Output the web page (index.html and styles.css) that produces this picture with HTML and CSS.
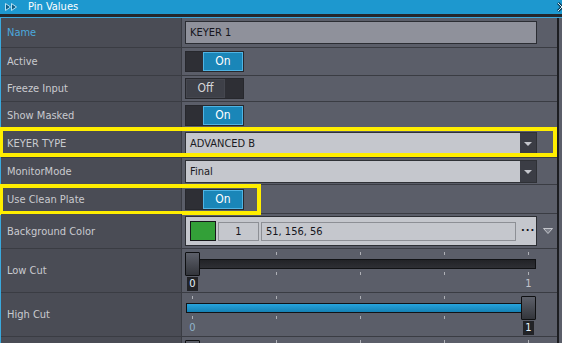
FILE: index.html
```html
<!DOCTYPE html>
<html lang="en">
<head>
    <meta charset="UTF-8">
    <meta name="viewport" content="width=device-width, initial-scale=1.0">
    <title>Pin Values</title>
    <link rel="stylesheet" href="styles.css">
</head>
<body>
    <!-- Title bar -->
    <div class="titlebar">
        <svg class="title-icon" width="13" height="8" viewBox="0 0 13 8">
            <path d="M0.5 0.5 L5.5 4 L0.5 7.5 Z M6.5 0.5 L11.5 4 L6.5 7.5 Z" fill="#0f5f88" stroke="#b6e1f4" stroke-width="1"/>
        </svg>
        <span class="title">Pin Values</span>
        <svg class="close" width="10" height="10" viewBox="0 0 10 10">
            <path d="M1 1 L9 9 M9 1 L1 9" stroke="#0c3c55" stroke-width="3"/>
            <path d="M1 1 L9 9 M9 1 L1 9" stroke="#d8f0fb" stroke-width="1"/>
        </svg>
    </div>
    <div class="shade"></div>

    <!-- Pin list -->
    <div class="content">
        <div class="grid">
            <div class="row row-name">
                <div class="label current">Name</div>
                <div class="value"><div class="textbox">KEYER 1</div></div>
            </div>
            <div class="row row-active">
                <div class="label">Active</div>
                <div class="value"><div class="toggle"><span class="knob">On</span></div></div>
            </div>
            <div class="row row-freeze">
                <div class="label">Freeze Input</div>
                <div class="value"><div class="toggle off"><span class="knob">Off</span></div></div>
            </div>
            <div class="row row-masked">
                <div class="label">Show Masked</div>
                <div class="value"><div class="toggle"><span class="knob">On</span></div></div>
            </div>
            <div class="row row-keyer">
                <div class="label">KEYER TYPE</div>
                <div class="value">
                    <div class="dropdown">
                        <span class="dropdown-text">ADVANCED B</span>
                        <span class="dropdown-arrow"></span>
                    </div>
                </div>
                <div class="mark mark-keyer"></div>
            </div>
            <div class="row row-monitor">
                <div class="label">MonitorMode</div>
                <div class="value">
                    <div class="dropdown">
                        <span class="dropdown-text">Final</span>
                        <span class="dropdown-arrow"></span>
                    </div>
                </div>
            </div>
            <div class="row row-plate">
                <div class="label">Use Clean Plate</div>
                <div class="value"><div class="toggle"><span class="knob">On</span></div></div>
                <div class="mark mark-plate"></div>
            </div>
            <div class="row row-color">
                <div class="label">Background Color</div>
                <div class="value">
                    <div class="color-field">
                        <div class="swatch"></div>
                        <div class="color-index">1</div>
                        <div class="color-rgb">51, 156, 56</div>
                        <div class="color-more">...</div>
                    </div>
                    <svg class="expand" width="10" height="6" viewBox="0 0 10 6">
                        <path d="M0.5 0.5 L9.5 0.5 L5 5.5 Z" fill="#7d808a" stroke="#c3c5cb" stroke-width="1"/>
                    </svg>
                </div>
            </div>
            <div class="row row-slider">
                <div class="label">Low Cut</div>
                <div class="value">
                    <div class="slider">
                        <div class="ticks"><i></i><i></i><i></i><i></i><i></i></div>
                        <div class="track"></div>
                        <div class="ticks"><i></i><i></i><i></i><i></i><i></i></div>
                        <div class="scale">
                            <span class="num selected">0</span>
                            <span class="num">1</span>
                        </div>
                        <div class="thumb at-min"></div>
                    </div>
                </div>
            </div>
            <div class="row row-slider">
                <div class="label">High Cut</div>
                <div class="value">
                    <div class="slider">
                        <div class="ticks"><i></i><i></i><i></i><i></i><i></i></div>
                        <div class="track filled"></div>
                        <div class="ticks"><i></i><i></i><i></i><i></i><i></i></div>
                        <div class="scale">
                            <span class="num dim">0</span>
                            <span class="num selected">1</span>
                        </div>
                        <div class="thumb at-max"></div>
                    </div>
                </div>
            </div>
            <div class="row row-slider">
                <div class="label"></div>
                <div class="value">
                    <div class="slider">
                        <div class="ticks"><i></i><i></i><i></i><i></i><i></i></div>
                        <div class="track"></div>
                        <div class="thumb at-min"></div>
                    </div>
                </div>
            </div>
        </div>
        <div class="edge"></div>
        <div class="gutter"></div>
    </div>
</body>
</html>
```

FILE: styles.css
```css
* {
    margin: 0;
    padding: 0;
    box-sizing: border-box;
}
body, html {
    width: 100%;
    height: 100%;
    overflow: hidden;
}
body {
    background-color: #5b5e69;
    font-family: "DejaVu Sans Condensed", "DejaVu Sans", sans-serif;
    font-stretch: condensed;
    font-size: 11px;
    color: #c9cacf;
}
/* Title bar */
.titlebar {
    height: 14px;
    background-color: #1d98cf;
    display: flex;
    align-items: center;
    color: #ffffff;
    overflow: hidden;
}
.title-icon {
    margin-left: 5px;
    flex: none;
}
.title {
    margin-left: 10px;
    line-height: 14px;
}
.close {
    margin-left: auto;
    margin-right: -5px;
    flex: none;
}
.shade {
    height: 3px;
    background-color: #24272c;
}
/* Pin list */
.content {
    display: flex;
    border-top: 1px solid #3aa9dd;
}
.grid {
    width: 557px;
    flex: none;
    border-left: 1px solid #3aa9dd;
}
.edge {
    width: 2px;
    background-color: #1c1d21;
}
.gutter {
    flex: 1;
    background-color: #5b5e69;
}
.row {
    display: flex;
    position: relative;
    border-bottom: 1px solid #3a3c43;
}
.row-name { height: 30px; }
.row-active { height: 28px; }
.row-freeze { height: 26px; }
.row-masked { height: 27px; }
.row-keyer { height: 29px; }
.row-monitor { height: 27px; }
.row-plate { height: 29px; }
.row-color { height: 35px; }
.row-slider { height: 44px; }
.label {
    width: 181px;
    flex: none;
    background-color: #4a4c55;
    border-right: 1px solid #3a3c43;
    padding-left: 6px;
    display: flex;
    align-items: center;
}
.label.current {
    color: #4ba9de;
}
.value {
    flex: 1;
    padding-left: 3px;
    display: flex;
    align-items: center;
}
.row-slider .value {
    align-items: flex-start;
}
/* Text field */
.textbox {
    width: 352px;
    height: 23px;
    background-color: #8f919b;
    border: 1px solid #2b2d33;
    color: #15151c;
    padding-left: 4px;
    line-height: 21px;
}
/* Toggle */
.toggle {
    width: 59px;
    height: 21px;
    display: flex;
    background-color: #2e2f35;
    border: 1px solid #27282d;
}
.toggle .knob {
    width: 40px;
    margin-left: auto;
    background-color: #1a86b8;
    border: 1px solid #4fb4e4;
    color: #ffffff;
    text-align: center;
    line-height: 17px;
    font-size: 12px;
}
.toggle.off .knob {
    width: 39px;
    margin-left: 0;
    background-color: #3e4048;
    border-color: #45474f;
    color: #d6d7da;
}
/* Dropdown */
.dropdown {
    width: 352px;
    height: 23px;
    display: flex;
    background-color: #c5c7cd;
    border: 1px solid #2f3136;
    color: #1a1a22;
}
.dropdown-text {
    flex: 1;
    padding-left: 4px;
    line-height: 21px;
}
.dropdown-arrow {
    width: 16px;
    background-color: #3b3d45;
    position: relative;
}
.dropdown-arrow::after {
    content: "";
    position: absolute;
    left: 4px;
    top: 9px;
    border-left: 4px solid transparent;
    border-right: 4px solid transparent;
    border-top: 4px solid #c3c5cb;
}
/* Highlight marks */
.mark {
    position: absolute;
    border: 4px solid #ffee00;
    pointer-events: none;
}
.mark-keyer {
    top: -2px;
    left: -2px;
    right: 0;
    bottom: 0;
}
.mark-plate {
    top: -1px;
    left: -2px;
    width: 262px;
    height: 31px;
}
/* Colour field */
.color-field {
    width: 352px;
    height: 30px;
    display: flex;
    align-items: center;
    gap: 2px;
    padding-left: 4px;
    background-color: #c5c7cd;
    border: 1px solid #2c2e33;
    color: #15151c;
}
.swatch {
    width: 26px;
    height: 20px;
    background-color: #33a038;
    border: 1px solid #16171a;
}
.color-index {
    width: 41px;
    height: 19px;
    border: 1px solid #8d8f95;
    text-align: center;
    line-height: 17px;
}
.color-rgb {
    width: 255px;
    height: 19px;
    border: 1px solid #8d8f95;
    padding-left: 4px;
    line-height: 17px;
}
.color-more {
    margin-left: 3px;
    font-weight: bold;
    letter-spacing: 1px;
    line-height: 8px;
    height: 14px;
}
.expand {
    margin-left: 6px;
}
/* Slider */
.slider {
    width: 352px;
    position: relative;
}
.ticks {
    display: flex;
    justify-content: space-between;
    padding: 0 8px 0 7px;
    height: 3px;
    margin-top: 3px;
}
.ticks i {
    width: 1px;
    background-color: #aeb0b6;
}
.track {
    height: 10px;
    width: 350px;
    margin: 4px 0 0 1px;
    background: linear-gradient(#222327, #2e2f34);
    border: 1px solid #111215;
}
.track + .ticks {
    margin-top: 3px;
}
.track.filled {
    background: linear-gradient(#27a3dc, #1581b4);
}
.scale {
    display: flex;
    justify-content: space-between;
    padding: 0 3px 0 2px;
    margin-top: 2px;
}
.num {
    width: 11px;
    height: 14px;
    text-align: center;
    line-height: 14px;
    font-size: 11px;
    color: #c2c4ca;
}
.num.selected {
    background-color: #222327;
    color: #e8f4fb;
}
.num.dim {
    color: #8fb3cb;
}
.thumb {
    position: absolute;
    top: 3px;
    width: 15px;
    height: 24px;
    background: linear-gradient(#5d606a, #33353b);
    border: 1px solid #0f1012;
    border-radius: 1px;
}
.thumb.at-min {
    left: 0;
}
.thumb.at-max {
    right: 1px;
}
```
